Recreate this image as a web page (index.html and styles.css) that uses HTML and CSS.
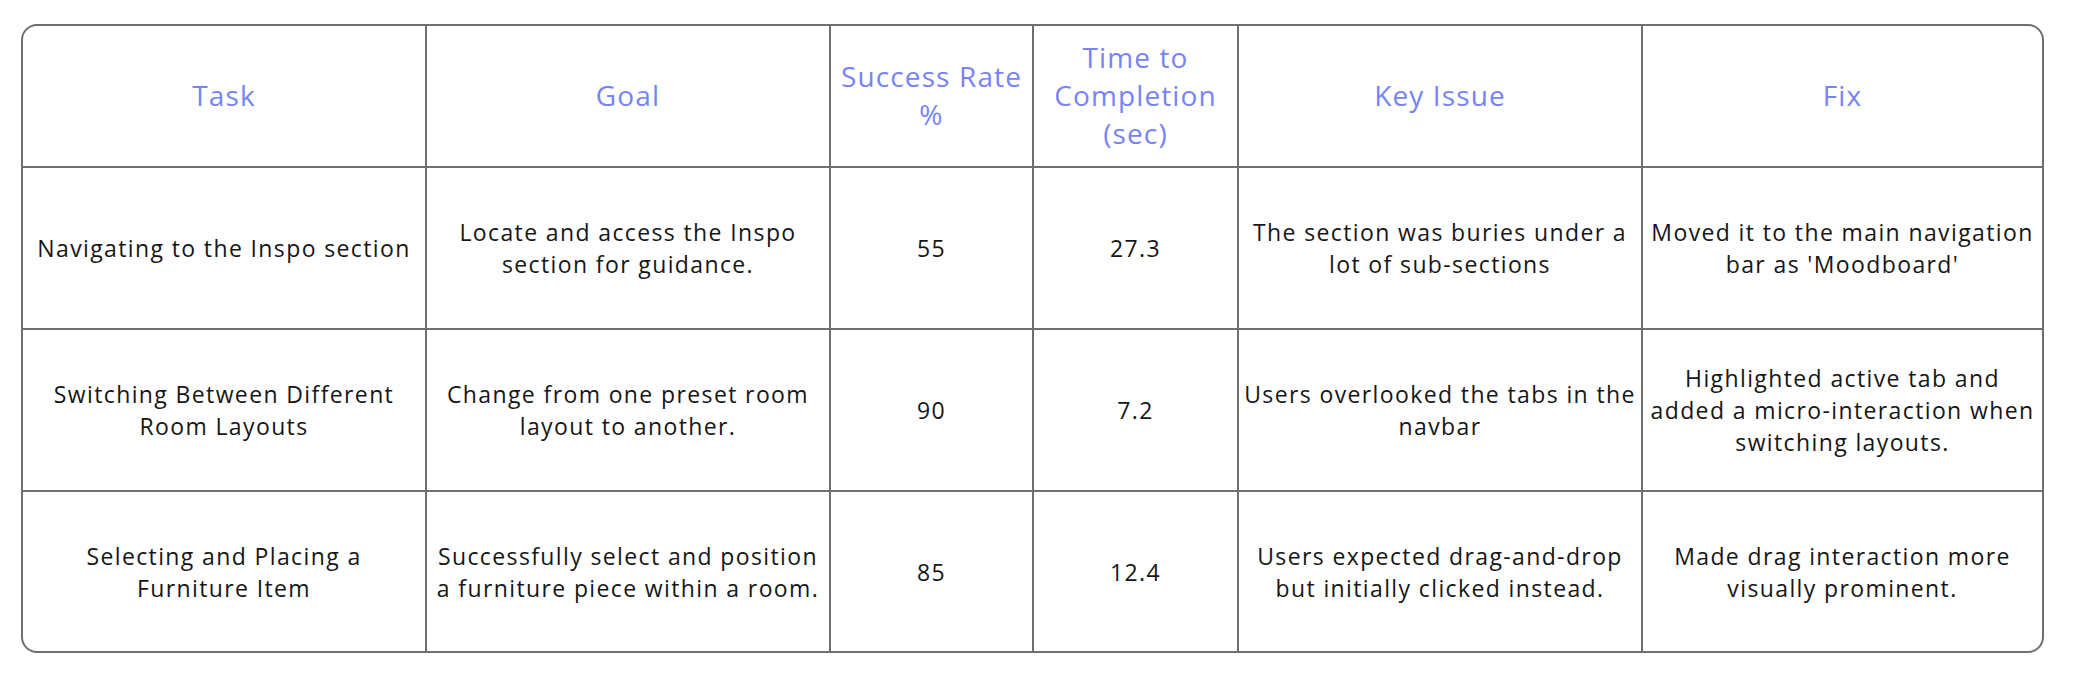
FILE: index.html
```html
<!DOCTYPE html>
<html lang="en">
<head>
<meta charset="utf-8">
<title>Usability Test Results</title>
<link rel="stylesheet" href="styles.css">
</head>
<body>
<div class="table" role="table">
  <div class="cell head" role="columnheader">Task</div>
  <div class="cell head" role="columnheader">Goal</div>
  <div class="cell head" role="columnheader">Success Rate<br>%</div>
  <div class="cell head" role="columnheader">Time to<br>Completion<br>(sec)</div>
  <div class="cell head" role="columnheader">Key Issue</div>
  <div class="cell head last-col" role="columnheader">Fix</div>

  <div class="cell" role="cell">Navigating to the Inspo section</div>
  <div class="cell" role="cell">Locate and access the Inspo<br>section for guidance.</div>
  <div class="cell" role="cell">55</div>
  <div class="cell" role="cell">27.3</div>
  <div class="cell" role="cell">The section was buries under a<br>lot of sub-sections</div>
  <div class="cell last-col" role="cell">Moved it to the main navigation<br>bar as 'Moodboard'</div>

  <div class="cell" role="cell">Switching Between Different<br>Room Layouts</div>
  <div class="cell" role="cell">Change from one preset room<br>layout to another.</div>
  <div class="cell" role="cell">90</div>
  <div class="cell" role="cell">7.2</div>
  <div class="cell" role="cell">Users overlooked the tabs in the<br>navbar</div>
  <div class="cell last-col" role="cell">Highlighted active tab and<br>added a micro-interaction when<br>switching layouts.</div>

  <div class="cell last-row" role="cell">Selecting and Placing a<br>Furniture Item</div>
  <div class="cell last-row" role="cell">Successfully select and position<br>a furniture piece within a room.</div>
  <div class="cell last-row" role="cell">85</div>
  <div class="cell last-row" role="cell">12.4</div>
  <div class="cell last-row" role="cell">Users expected drag-and-drop<br>but initially clicked instead.</div>
  <div class="cell last-row last-col" role="cell">Made drag interaction more<br>visually prominent.</div>
</div>
</body>
</html>
```

FILE: styles.css
```css
* { box-sizing: border-box; }

html, body {
  margin: 0;
  padding: 0;
  background: #ffffff;
}

body {
  font-family: "Open Sans", "Liberation Sans", sans-serif;
  color: #161616;
}

.table {
  margin: 24px 0 0 21px;
  width: 2023px;
  border: 2px solid #6f6f6f;
  border-radius: 16px;
  overflow: hidden;
  display: grid;
  grid-template-columns: 404px 404px 203px 205px 404px 399px;
  grid-template-rows: 142px 162px 162px 159px;
}

.cell {
  display: flex;
  align-items: center;
  justify-content: center;
  text-align: center;
  white-space: nowrap;
  border-right: 2px solid #6f6f6f;
  border-bottom: 2px solid #6f6f6f;
  font-size: 23px;
  line-height: 32px;
  letter-spacing: 0.06em;
  font-weight: 400;
}

.head {
  color: #7684f5;
  font-size: 28px;
  line-height: 38px;
  font-weight: 400;
  letter-spacing: 0.04em;
  padding-bottom: 3px;
}

.last-col { border-right: none; }
.last-row { border-bottom: none; }
```
